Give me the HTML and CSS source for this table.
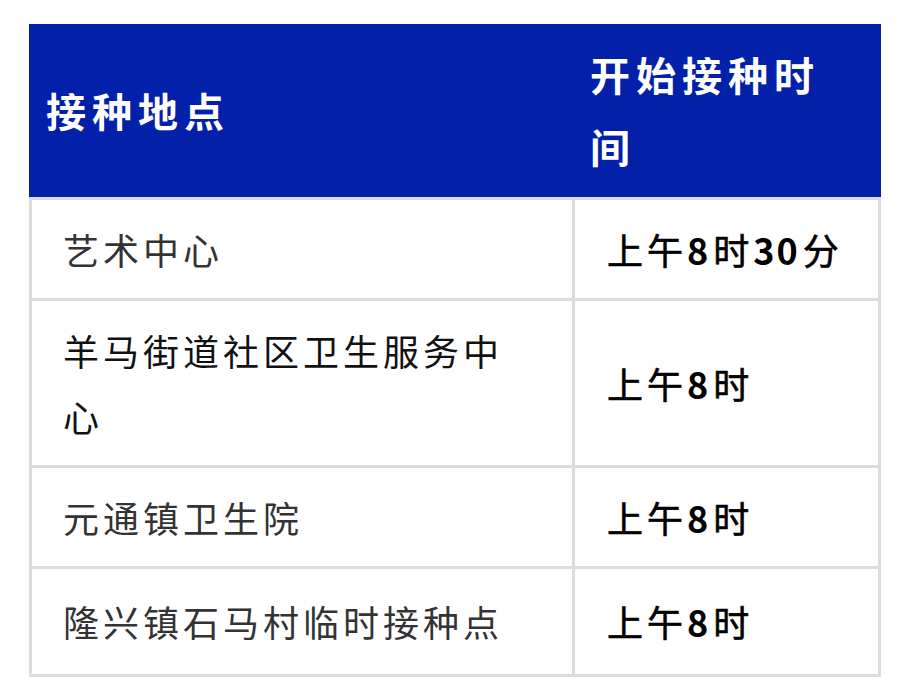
FILE: index.html
```html
<!DOCTYPE html>
<html lang="zh-CN">
<head>
<meta charset="utf-8">
<title>接种地点</title>
<link rel="stylesheet" href="styles.css">
</head>
<body>
<div class="table">
  <div class="th th-left">接种地点</div>
  <div class="th th-right">开始接种时间</div>

  <div class="td place first-row first-col">艺术中心</div>
  <div class="td time first-row">上午<span class="num">8</span>时<span class="num">30</span>分</div>

  <div class="td place dark first-col">羊马街道社区卫生服务中心</div>
  <div class="td time">上午<span class="num">8</span>时</div>

  <div class="td place first-col">元通镇卫生院</div>
  <div class="td time">上午<span class="num">8</span>时</div>

  <div class="td place first-col tall">隆兴镇石马村临时接种点</div>
  <div class="td time tall">上午<span class="num">8</span>时</div>
</div>
</body>
</html>
```

FILE: styles.css
```css
* {
  box-sizing: border-box;
}

html, body {
  margin: 0;
  padding: 0;
  background: #ffffff;
}

body {
  padding: 24px 0 0 29px;
  font-family: "Noto Sans CJK SC", "Noto Sans", sans-serif;
}

.table {
  display: grid;
  grid-template-columns: 546px 306px;
  width: 852px;
}

.th {
  background: #0320a9;
  color: #ffffff;
  font-size: 40px;
  font-weight: 700;
  letter-spacing: 6px;
  line-height: 72px;
  padding: 14px 20px 15px 17px;
  display: flex;
  align-items: center;
}

.th-right {
  padding-left: 15px;
}

.td {
  border-right: 3px solid #dcdcdc;
  border-bottom: 3px solid #dcdcdc;
  line-height: 66px;
  padding: 16px 20px 16px 32px;
  display: flex;
  align-items: center;
}

.first-col {
  border-left: 3px solid #dcdcdc;
}

.first-row {
  border-top: 3px solid #dcdcdc;
}

.place {
  font-size: 36px;
  letter-spacing: 4px;
  color: #333333;
  padding-left: 31px;
  padding-right: 60px;
}

.place.dark {
  color: #111111;
}

.time {
  font-size: 36px;
  font-weight: 400;
  letter-spacing: 4px;
  color: #000000;
  white-space: pre;
  -webkit-text-stroke: 0.6px #000000;
}

.num {
  font-weight: 700;
  letter-spacing: 2px;
  padding-right: 3px;
  -webkit-text-stroke: 0;
}

.tall {
  padding-top: 19px;
  padding-bottom: 20px;
}
```
